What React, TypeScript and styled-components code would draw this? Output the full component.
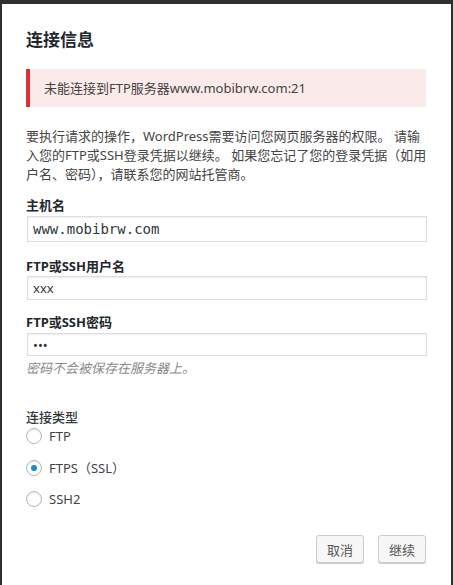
import React from "react";
import styled, { createGlobalStyle } from "styled-components";

const Global = createGlobalStyle`
  html, body { margin: 0; padding: 0; background: #2f2f2f; }
  body { font-family: "Noto Sans", "Noto Sans CJK SC", sans-serif; }
  * { box-sizing: border-box; }
`;

const Backdrop = styled.div`
  width: 453px;
  height: 585px;
  padding: 4px 2px 0 2px;
  background: #2f2f2f;
  overflow: hidden;
`;

const Panel = styled.form`
  background: #fff;
  height: 581px;
  padding: 24px 24px 0 24px;
  display: flex;
  flex-direction: column;
  color: #444;
  font-size: 13px;
`;

const Title = styled.h2`
  margin: 0 0 17px;
  font-size: 17px;
  line-height: 24px;
  font-weight: 700;
  color: #23282d;
`;

const Notice = styled.div`
  border-left: 4px solid #dc3232;
  background: #fbeaea;
  padding: 9px 14px;
  line-height: 20px;
  color: #444;
  width: 400px;
`;

const Intro = styled.p`
  margin: 20px 0 12px;
  line-height: 19px;
  width: 404px;
`;

const Field = styled.label`
  display: flex;
  flex-direction: column;
`;

const FieldName = styled.span<{ $gap?: number }>`
  font-weight: 700;
  line-height: 18px;
  color: #23282d;
  margin-bottom: ${(p) => p.$gap ?? 2}px;
`;

const TextInput = styled.input<{ $mono?: boolean; $h: number }>`
  width: 400px;
  height: ${(p) => p.$h}px;
  margin-left: 1px;
  padding: 0 5px;
  border: 1px solid #ddd;
  box-shadow: inset 0 1px 2px rgba(0, 0, 0, 0.07);
  background: #fff;
  color: #32373c;
  outline: none;
  font-family: ${(p) =>
    p.$mono ? '"DejaVu Sans Mono", monospace' : '"Noto Sans", "Noto Sans CJK SC", sans-serif'};
  font-size: ${(p) => (p.$mono ? 14 : 13)}px;
`;

const Spacer = styled.div<{ $h: number }>`
  height: ${(p) => p.$h}px;
  flex: none;
`;

const Hint = styled.span`
  margin-top: 3px;
  font-style: italic;
  color: #8a8a8a;
  line-height: 18px;
`;

const Legend = styled.div`
  margin-top: 31px;
  line-height: 18px;
  color: #32373c;
  font-weight: 500;
`;

const RadioList = styled.div`
  display: flex;
  flex-direction: column;
  gap: 11.5px;
`;

const RadioRow = styled.label`
  display: flex;
  align-items: center;
  gap: 7px;
  height: 20px;
  color: #444;
`;

const RadioCircle = styled.span<{ $on?: boolean }>`
  width: 16px;
  height: 16px;
  border-radius: 50%;
  border: 1px solid #b4b9be;
  background: #fff;
  box-shadow: inset 0 1px 2px rgba(0, 0, 0, 0.1);
  display: flex;
  align-items: center;
  justify-content: center;
  flex: none;
  &::after {
    content: "";
    display: ${(p) => (p.$on ? "block" : "none")};
    width: 6px;
    height: 6px;
    border-radius: 50%;
    background: #1e8cbe;
  }
`;

const Actions = styled.div`
  margin-top: 26px;
  display: flex;
  justify-content: flex-end;
  gap: 14px;
  padding-right: 1px;
`;

const Button = styled.button`
  height: 28px;
  padding: 0 10px;
  font-family: "Noto Sans", "Noto Sans CJK SC", sans-serif;
  font-size: 13px;
  color: #555;
  background: #f7f7f7;
  border: 1px solid #ccc;
  border-radius: 3px;
  box-shadow: 0 1px 0 #ccc;
  cursor: pointer;
`;

const types = [
  { label: "FTP", on: false },
  { label: "FTPS（SSL）", on: true },
  { label: "SSH2", on: false },
];

export default function App() {
  return (
    <>
      <Global />
      <Backdrop>
        <Panel onSubmit={(e) => e.preventDefault()}>
          <Title>连接信息</Title>
          <Notice>未能连接到FTP服务器www.mobibrw.com:21</Notice>
          <Intro>
            要执行请求的操作，WordPress需要访问您网页服务器的权限。 请输入您的FTP或SSH登录凭据以继续。
            如果您忘记了您的登录凭据（如用户名、密码），请联系您的网站托管商。
          </Intro>
          <Field>
            <FieldName>主机名</FieldName>
            <TextInput $mono $h={26} defaultValue="www.mobibrw.com" />
          </Field>
          <Spacer $h={15} />
          <Field>
            <FieldName $gap={1}>FTP或SSH用户名</FieldName>
            <TextInput $h={24} defaultValue="xxx" />
          </Field>
          <Spacer $h={13} />
          <Field>
            <FieldName>FTP或SSH密码</FieldName>
            <TextInput $h={23} type="password" defaultValue="xxx" />
            <Hint>密码不会被保存在服务器上。</Hint>
          </Field>
          <Legend>连接类型</Legend>
          <RadioList>
            {types.map((t) => (
              <RadioRow key={t.label}>
                <RadioCircle $on={t.on} />
                {t.label}
              </RadioRow>
            ))}
          </RadioList>
          <Actions>
            <Button type="button">取消</Button>
            <Button type="submit">继续</Button>
          </Actions>
        </Panel>
      </Backdrop>
    </>
  );
}
